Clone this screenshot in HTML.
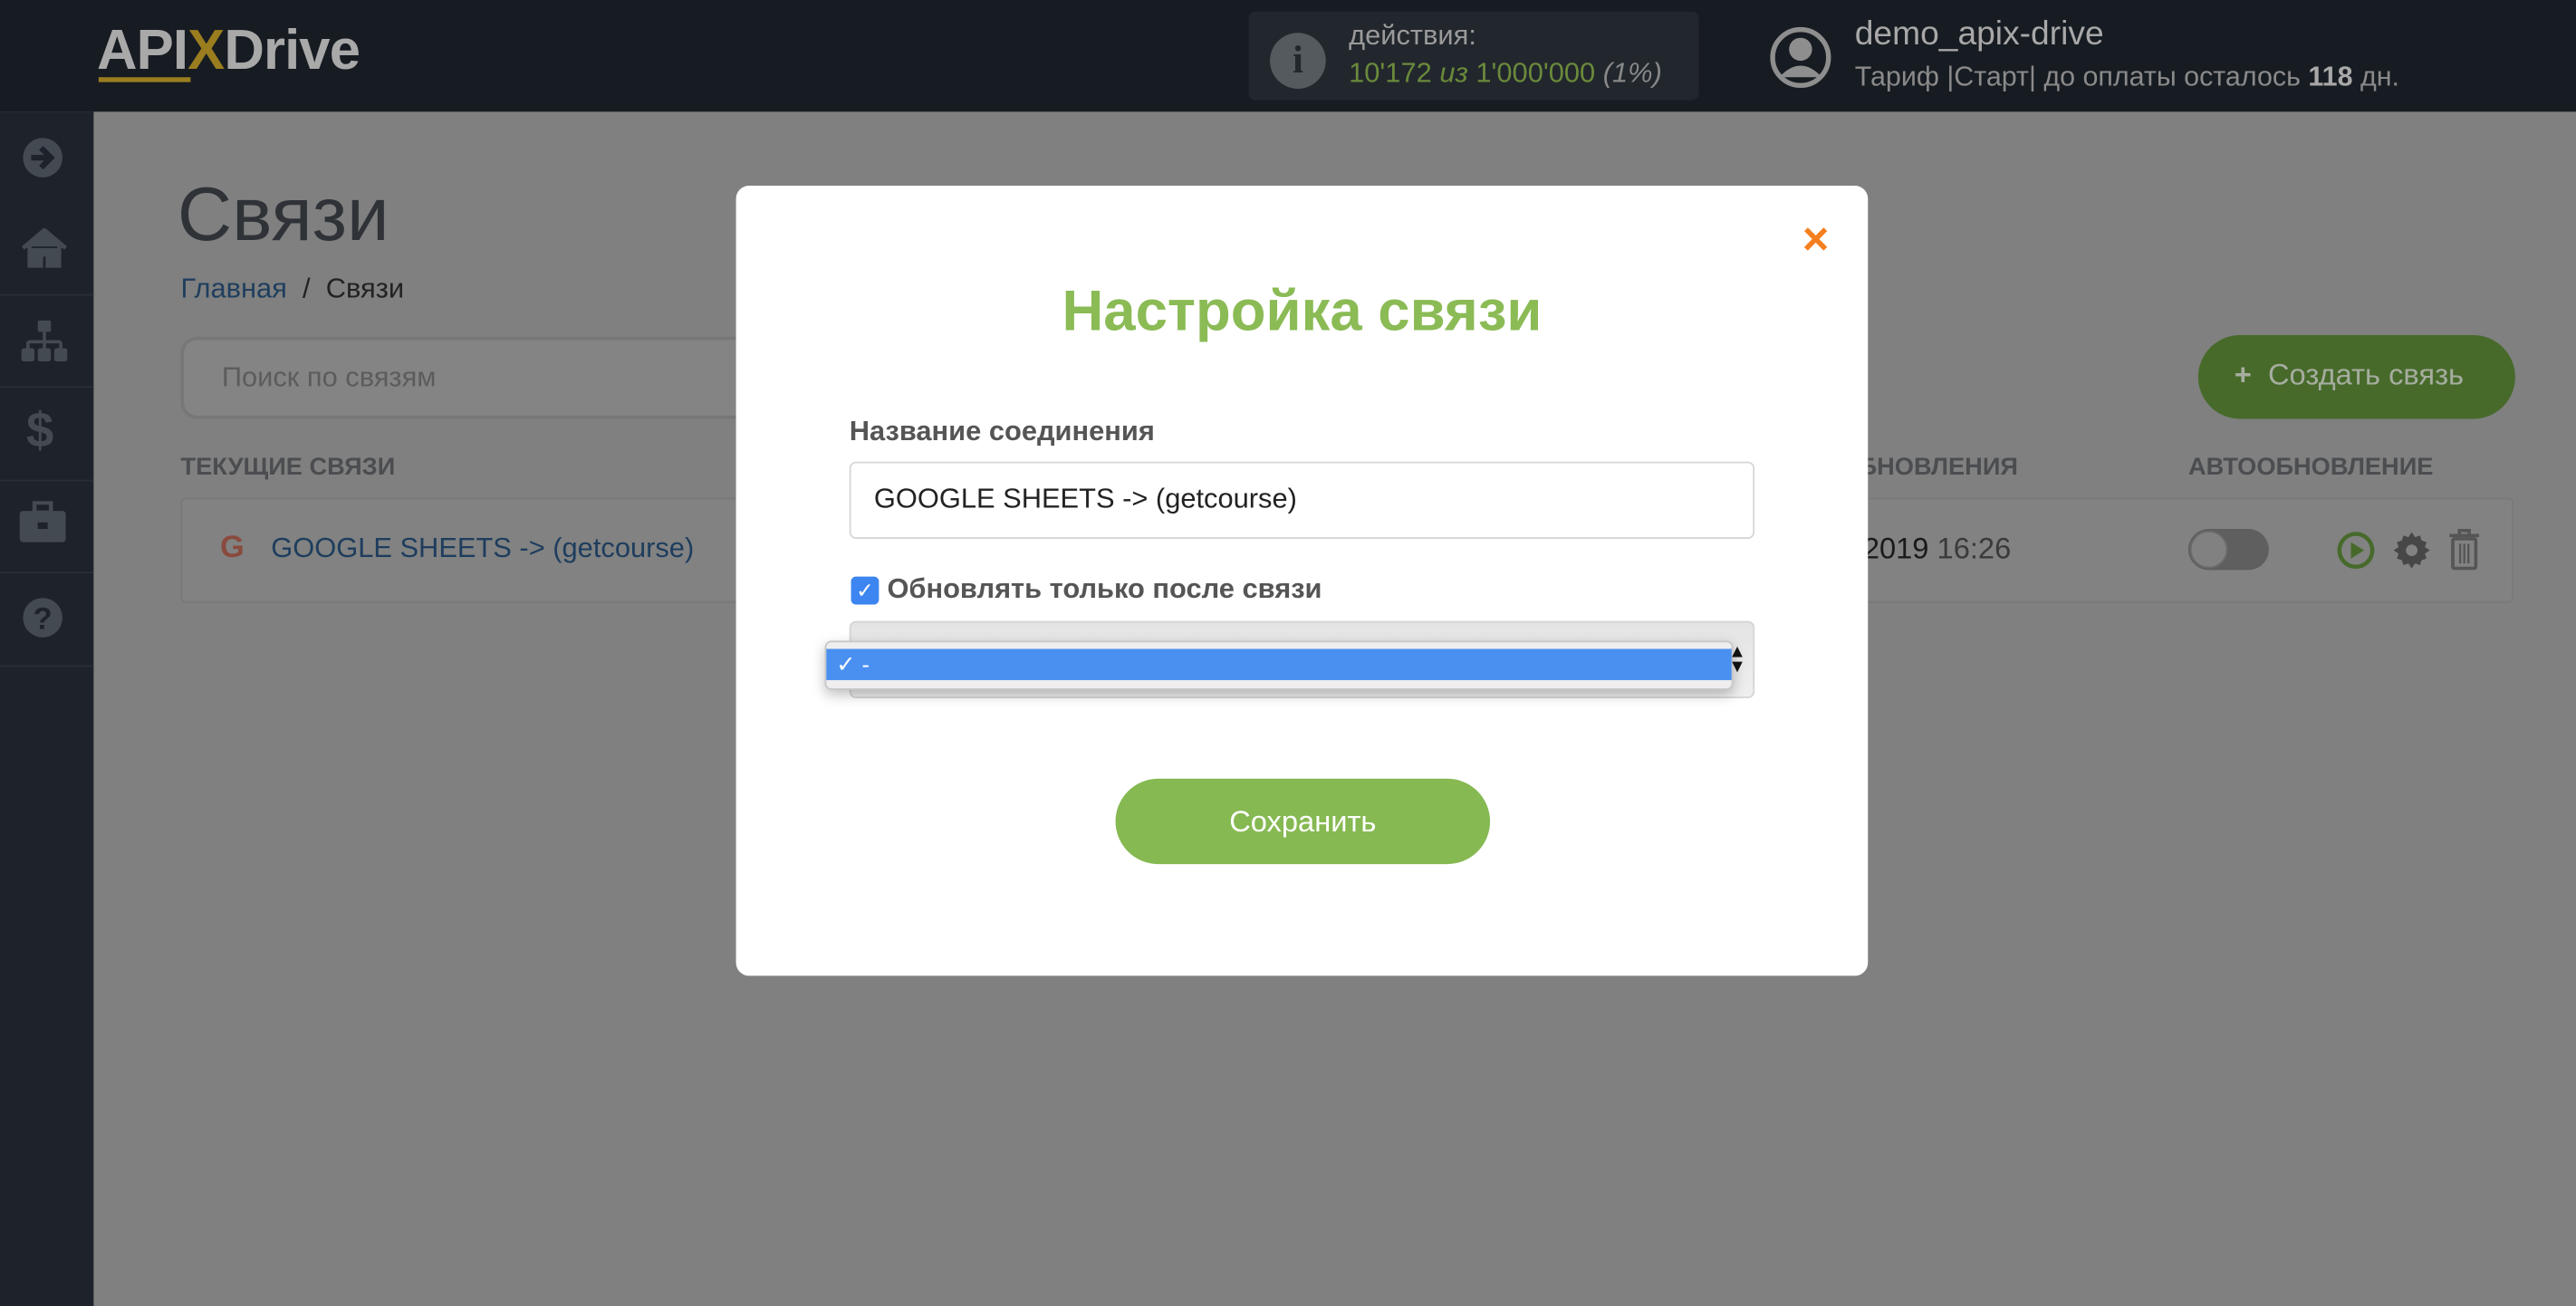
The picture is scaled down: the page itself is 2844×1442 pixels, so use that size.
<!DOCTYPE html>
<html><head><meta charset="utf-8"><style>
*{margin:0;padding:0;box-sizing:border-box}
html,body{width:2844px;height:1442px;overflow:hidden;background:#7f807f}
#w{position:absolute;left:0;top:0;width:1568px;height:795px;transform:scale(1.81378,1.81384);transform-origin:0 0;font-family:"Liberation Sans",sans-serif;background:#7f807f}
.a{position:absolute;white-space:nowrap}
.sep{position:absolute;left:0;width:57px;height:1px;background:#2a2f37}
</style></head><body><div id="w">
<div class="a" style="left:0;top:0;width:1568px;height:68px;background:#171b22"></div>
<div class="a" style="left:59px;top:12px;font-size:34px;font-weight:bold;color:#a9a9a9;letter-spacing:-0.5px">API<span style="color:#9a7d1f">X</span>Drive</div>
<div class="a" style="left:60px;top:47px;width:56px;height:3px;background:#9a7d1f"></div>
<div class="a" style="left:760px;top:7px;width:274px;height:54px;background:#22272d;border-radius:4px"></div>
<div class="a" style="left:773px;top:20px;width:34px;height:34px;border-radius:50%;background:#555a5f;color:#22272d;font-weight:bold;font-size:24px;text-align:center;line-height:34px;font-family:'Liberation Serif',serif">i</div>
<div class="a" style="left:821px;top:12px;font-size:17px;color:#9a9a9a">действия:</div>
<div class="a" style="left:821px;top:35px;font-size:17px;color:#6b8a3b">10'172 <i>из</i> 1'000'000 <i style="color:#888">(1%)</i></div>
<svg class="a" style="left:1077px;top:15px" width="38" height="40" viewBox="0 0 38 40"><circle cx="19" cy="20" r="17" fill="none" stroke="#8e8e8e" stroke-width="3"/><circle cx="19" cy="15" r="7" fill="#8e8e8e"/><path d="M6 32 Q19 18 32 32" fill="#8e8e8e"/></svg>
<div class="a" style="left:1129px;top:9px;font-size:20.5px;color:#a8a8a8">demo_apix-drive</div>
<div class="a" style="left:1129px;top:37px;font-size:16.8px;color:#8a8a8a">Тариф |Старт| до оплаты осталось <b style="color:#a8a8a8">118</b> дн.</div>
<div class="a" style="left:0;top:68px;width:57px;height:727px;background:#1e232b"></div>
<div class="sep" style="top:179px"></div><div class="sep" style="top:235px"></div><div class="sep" style="top:292px"></div><div class="sep" style="top:348px"></div><div class="sep" style="top:405px"></div>
<svg class="a" style="left:13px;top:83px" width="26" height="26"><circle cx="13" cy="13" r="12" fill="#444a52"/><path d="M6 13h11M12 7l6 6-6 6" stroke="#1e232b" stroke-width="3.5" fill="none"/></svg>
<svg class="a" style="left:13px;top:139px" width="28" height="24"><path d="M1 12 14 1l13 11M5 11v12h7v-7h4v7h7V11" fill="#444a52" stroke="#444a52" stroke-width="2.5"/></svg>
<svg class="a" style="left:13px;top:195px" width="28" height="26"><rect x="10" y="0" width="8" height="7" rx="1" fill="#444a52"/><path d="M14 7v6M4 13h20M4 13v5M14 13v5M24 13v5" stroke="#444a52" stroke-width="2"/><rect x="0" y="17" width="8" height="8" rx="1.5" fill="#444a52"/><rect x="10" y="17" width="8" height="8" rx="1.5" fill="#444a52"/><rect x="20" y="17" width="8" height="8" rx="1.5" fill="#444a52"/></svg>
<div class="a" style="left:16px;top:246px;font-size:30px;font-weight:bold;color:#444a52">$</div>
<svg class="a" style="left:11px;top:305px" width="30" height="26"><rect x="10" y="1" width="10" height="6" fill="none" stroke="#444a52" stroke-width="2.5"/><rect x="1" y="6" width="28" height="19" rx="2" fill="#444a52"/><rect x="12" y="13" width="6" height="4" fill="#1e232b"/></svg>
<svg class="a" style="left:13px;top:363px" width="26" height="26"><circle cx="13" cy="13" r="12" fill="#444a52"/><text x="13" y="20" text-anchor="middle" font-size="19" font-weight="bold" fill="#1e232b" font-family="Liberation Sans">?</text></svg>
<div class="a" style="left:108px;top:103px;font-size:46px;color:#2f3338">Связи</div>
<div class="a" style="left:110px;top:166px;font-size:17px;color:#1f3e5e">Главная <span style="color:#222">&nbsp;/&nbsp; Связи</span></div>
<div class="a" style="left:110px;top:205px;width:360px;height:50px;border:2px solid #767776;border-radius:10px;background:#838483"></div>
<div class="a" style="left:135px;top:220px;font-size:17px;color:#5b5c5b">Поиск по связям</div>
<div class="a" style="left:110px;top:276px;font-size:15px;font-weight:bold;color:#4b4d50">ТЕКУЩИЕ СВЯЗИ</div>
<div class="a" style="left:1120px;top:276px;font-size:15px;font-weight:bold;color:#4b4d50">ОБНОВЛЕНИЯ</div>
<div class="a" style="left:1332px;top:276px;font-size:15px;font-weight:bold;color:#4b4d50">АВТООБНОВЛЕНИЕ</div>
<div class="a" style="left:1338px;top:204px;width:193px;height:51px;border-radius:26px;background:#476a2b"></div>
<div class="a" style="left:1360px;top:218px;font-size:18px;color:#a6ad9f"><b>+</b>&nbsp; Создать связь</div>
<div class="a" style="left:110px;top:303px;width:1420px;height:64px;border:1px solid #787978;border-radius:3px;background:#818281"></div>
<div class="a" style="left:134px;top:323px;font-size:19px;font-weight:bold;color:#8a4a3e">G</div>
<div class="a" style="left:165px;top:324px;font-size:17px;color:#1e3d5e">GOOGLE SHEETS -&gt; (getcourse)</div>
<div class="a" style="left:1134px;top:324px;font-size:18px;color:#1a1a1a">2019 <span style="color:#3a3a3a">16:26</span></div>
<div class="a" style="left:1332px;top:322px;width:49px;height:25px;border-radius:13px;background:#5e5f5e"></div>
<div class="a" style="left:1333px;top:323px;width:23px;height:23px;border-radius:50%;background:#808180;border:1px solid #6a6b6a"></div>
<svg class="a" style="left:1422px;top:322px" width="26" height="26"><circle cx="12" cy="13" r="10" fill="none" stroke="#476a2b" stroke-width="2.5"/><path d="M9 8v10l8-5z" fill="#476a2b"/></svg>
<svg class="a" style="left:1456px;top:323px" width="24" height="24" viewBox="0 0 24 24"><path d="M12 1l2 3 3-1 1 3 3 1-1 3 3 2-3 2 1 3-3 1-1 3-3-1-2 3-2-3-3 1-1-3-3-1 1-3-3-2 3-2-1-3 3-1 1-3 3 1z" fill="#474747"/><circle cx="12" cy="12" r="3.5" fill="#818281"/></svg>
<svg class="a" style="left:1490px;top:322px" width="20" height="25"><path d="M1 4h18M7 4V1h6v3" stroke="#555" stroke-width="2" fill="none"/><rect x="3" y="6" width="14" height="18" rx="1" fill="none" stroke="#555" stroke-width="2"/><path d="M7.5 9v12M10 9v12M12.5 9v12" stroke="#555" stroke-width="1.3"/></svg>
<div class="a" style="left:448px;top:113px;width:689px;height:481px;background:#fff;border-radius:8px"></div>
<div class="a" style="left:1097px;top:130px;font-size:28px;font-weight:bold;color:#f47f20">×</div>
<div class="a" style="left:448px;top:170px;width:689px;text-align:center;font-size:35px;font-weight:bold;color:#8bbb55">Настройка связи</div>
<div class="a" style="left:517px;top:253px;font-size:17px;font-weight:bold;color:#555">Название соединения</div>
<div class="a" style="left:517px;top:281px;width:551px;height:47px;border:1px solid #d6d6d6;border-radius:4px"></div>
<div class="a" style="left:532px;top:294px;font-size:17px;color:#222">GOOGLE SHEETS -&gt; (getcourse)</div>
<div class="a" style="left:518px;top:351px;width:17px;height:17px;border-radius:3px;background:#3d85f0;color:#fff;font-size:13px;text-align:center;line-height:17px">✓</div>
<div class="a" style="left:540px;top:349px;font-size:17px;font-weight:bold;color:#555">Обновлять только после связи</div>
<div class="a" style="left:517px;top:378px;width:551px;height:47px;border:1px solid #d4d4d4;border-radius:4px;background:linear-gradient(#e4e4e4,#efefef)"></div>
<div class="a" style="left:502px;top:390px;width:553px;height:30px;background:#eee;border:1px solid #c8c8c8;border-radius:4px;box-shadow:0 3px 8px rgba(0,0,0,.25)"></div>
<div class="a" style="left:503px;top:395px;width:551px;height:19px;background:#4a90f0;color:#fff;font-size:14px;line-height:19px;padding-left:6px">✓ -</div>
<div class="a" style="left:1052px;top:393px;font-size:11px;color:#111;line-height:9px">▲<br>▼</div>
<div class="a" style="left:679px;top:474px;width:228px;height:52px;border-radius:26px;background:#86b952;color:#fff;font-size:18px;text-align:center;line-height:52px">Сохранить</div>
</div></body></html>
